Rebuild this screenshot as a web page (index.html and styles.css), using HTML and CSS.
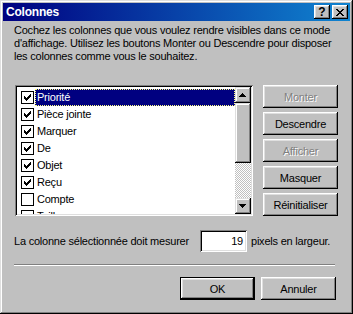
FILE: index.html
```html
<!DOCTYPE html>
<html lang="fr">
<head>
<meta charset="utf-8">
<title>Colonnes</title>
<link rel="stylesheet" href="styles.css">
</head>
<body>
<div class="window">
  <div class="titlebar">
    <span class="title">Colonnes</span>
    <div class="tbtns">
      <span class="tbtn raised help">?</span>
      <span class="tbtn raised close"><svg width="8" height="7" viewBox="0 0 8 7" shape-rendering="crispEdges"><path d="M0 0h2v1H0zM6 0h2v1H6zM1 1h2v1H1zM5 1h2v1H5zM2 2h4v1H2zM3 3h2v1H3zM2 4h4v1H2zM1 5h2v1H1zM5 5h2v1H5zM0 6h2v1H0zM6 6h2v1H6z" fill="#000"/></svg></span>
    </div>
  </div>
  <p class="desc">Cochez les colonnes que vous voulez rendre visibles dans ce mode<br>d'affichage. Utilisez les boutons Monter ou Descendre pour disposer<br>les colonnes comme vous le souhaitez.</p>
  <div class="main">
    <div class="listbox sunken">
      <ul class="rows">
        <li class="row selected"><svg class="cb" width="13" height="13" viewBox="0 0 13 13" shape-rendering="crispEdges"><rect x="0.5" y="0.5" width="12" height="12" fill="#fff" stroke="#000"/><path d="M3 5h1v3H3zM4 6h1v3H4zM5 7h1v3H5zM6 6h1v3H6zM7 5h1v3H7zM8 4h1v3H8zM9 3h1v3H9z" fill="#000"/></svg><span class="label">Priorité</span></li>
        <li class="row"><svg class="cb" width="13" height="13" viewBox="0 0 13 13" shape-rendering="crispEdges"><rect x="0.5" y="0.5" width="12" height="12" fill="#fff" stroke="#000"/><path d="M3 5h1v3H3zM4 6h1v3H4zM5 7h1v3H5zM6 6h1v3H6zM7 5h1v3H7zM8 4h1v3H8zM9 3h1v3H9z" fill="#000"/></svg><span class="label">Pièce jointe</span></li>
        <li class="row"><svg class="cb" width="13" height="13" viewBox="0 0 13 13" shape-rendering="crispEdges"><rect x="0.5" y="0.5" width="12" height="12" fill="#fff" stroke="#000"/><path d="M3 5h1v3H3zM4 6h1v3H4zM5 7h1v3H5zM6 6h1v3H6zM7 5h1v3H7zM8 4h1v3H8zM9 3h1v3H9z" fill="#000"/></svg><span class="label">Marquer</span></li>
        <li class="row"><svg class="cb" width="13" height="13" viewBox="0 0 13 13" shape-rendering="crispEdges"><rect x="0.5" y="0.5" width="12" height="12" fill="#fff" stroke="#000"/><path d="M3 5h1v3H3zM4 6h1v3H4zM5 7h1v3H5zM6 6h1v3H6zM7 5h1v3H7zM8 4h1v3H8zM9 3h1v3H9z" fill="#000"/></svg><span class="label">De</span></li>
        <li class="row"><svg class="cb" width="13" height="13" viewBox="0 0 13 13" shape-rendering="crispEdges"><rect x="0.5" y="0.5" width="12" height="12" fill="#fff" stroke="#000"/><path d="M3 5h1v3H3zM4 6h1v3H4zM5 7h1v3H5zM6 6h1v3H6zM7 5h1v3H7zM8 4h1v3H8zM9 3h1v3H9z" fill="#000"/></svg><span class="label">Objet</span></li>
        <li class="row"><svg class="cb" width="13" height="13" viewBox="0 0 13 13" shape-rendering="crispEdges"><rect x="0.5" y="0.5" width="12" height="12" fill="#fff" stroke="#000"/><path d="M3 5h1v3H3zM4 6h1v3H4zM5 7h1v3H5zM6 6h1v3H6zM7 5h1v3H7zM8 4h1v3H8zM9 3h1v3H9z" fill="#000"/></svg><span class="label">Reçu</span></li>
        <li class="row"><svg class="cb" width="13" height="13" viewBox="0 0 13 13" shape-rendering="crispEdges"><rect x="0.5" y="0.5" width="12" height="12" fill="#fff" stroke="#000"/></svg><span class="label">Compte</span></li>
        <li class="row"><svg class="cb" width="13" height="13" viewBox="0 0 13 13" shape-rendering="crispEdges"><rect x="0.5" y="0.5" width="12" height="12" fill="#fff" stroke="#000"/></svg><span class="label">Taille</span></li>
      </ul>
      <div class="scrollbar">
        <span class="sbtn sraised"><svg width="16" height="16" viewBox="0 0 16 16" shape-rendering="crispEdges"><path d="M7 6h1v1H7zM6 7h3v1H6zM5 8h5v1H5zM4 9h7v1H4z" fill="#000"/></svg></span>
        <span class="thumb sraised"></span>
        <span class="track"></span>
        <span class="sbtn sraised"><svg width="16" height="16" viewBox="0 0 16 16" shape-rendering="crispEdges"><path d="M4 6h7v1H4zM5 7h5v1H5zM6 8h3v1H6zM7 9h1v1H7z" fill="#000"/></svg></span>
      </div>
    </div>
    <div class="side">
      <span class="btn raised disabled">Monter</span>
      <span class="btn raised">Descendre</span>
      <span class="btn raised disabled">Afficher</span>
      <span class="btn raised">Masquer</span>
      <span class="btn raised">Réinitialiser</span>
    </div>
  </div>
  <div class="width-row">
    <span class="wlabel">La colonne sélectionnée doit mesurer</span>
    <span class="input sunken">19</span>
    <span class="suffix">pixels en largeur.</span>
  </div>
  <div class="sep"></div>
  <div class="footer">
    <span class="btn raised default">OK</span>
    <span class="btn raised">Annuler</span>
  </div>
</div>
</body>
</html>
```
FILE: styles.css
```css
html, body {
  margin: 0;
  padding: 0;
  background: #c0c0c0;
}
body {
  font-family: "Liberation Sans", Arial, sans-serif;
  font-size: 11px;
  letter-spacing: -0.22px;
  color: #000;
}
.window {
  box-sizing: border-box;
  width: 353px;
  height: 314px;
  padding: 3px;
  background: #c0c0c0;
  box-shadow: inset -1px -1px #000, inset 1px 1px #dfdfdf, inset -2px -2px #808080, inset 2px 2px #fff;
  display: flex;
  flex-direction: column;
}
.titlebar {
  height: 18px;
  background: linear-gradient(to right, #000080, #1084d0);
  display: flex;
  align-items: center;
  justify-content: space-between;
  padding: 0 2px 0 3px;
}
.title {
  color: #fff;
  font-weight: bold;
  font-size: 12px;
  letter-spacing: -0.2px;
}
.tbtns {
  display: flex;
  gap: 2px;
}
.tbtn {
  width: 16px;
  height: 14px;
  display: flex;
  align-items: center;
  justify-content: center;
  box-sizing: border-box;
}
.help {
  font-weight: bold;
  font-size: 12px;
  line-height: 14px;
  letter-spacing: 0;
}
.close svg { display: block; }
.raised {
  background: #c0c0c0;
  box-shadow: inset -1px -1px #000, inset 1px 1px #fff, inset -2px -2px #808080, inset 2px 2px #dfdfdf;
}
.sraised {
  background: #c0c0c0;
  box-shadow: inset -1px -1px #000, inset 1px 1px #dfdfdf, inset -2px -2px #808080, inset 2px 2px #fff;
}
.sunken {
  box-shadow: inset 1px 1px #808080, inset -1px -1px #fff, inset 2px 2px #000, inset -2px -2px #dfdfdf;
}
.desc {
  margin: 3px 0 0 11px;
  line-height: 13px;
}
.main {
  display: flex;
  margin: 22px 0 0 12px;
}
.listbox {
  box-sizing: border-box;
  width: 238px;
  height: 131px;
  padding: 2px;
  background: #fff;
  display: flex;
}
.rows {
  list-style: none;
  margin: 0;
  padding: 2px 0 0 0;
  flex: 1;
  overflow: hidden;
}
.row {
  height: 17px;
  display: flex;
  align-items: center;
  padding-left: 4px;
}
.cb { display: block; flex: none; }
.label {
  flex: 1;
  margin-left: 1px;
  padding: 0 2px;
  line-height: 17px;
  height: 17px;
  white-space: nowrap;
}
.selected .label {
  background: #000080;
  color: #fff;
  outline: 1px dotted #ffff80;
  outline-offset: -1px;
}
.scrollbar {
  width: 16px;
  display: flex;
  flex-direction: column;
}
.sbtn {
  width: 16px;
  height: 16px;
  flex: none;
}
.sbtn svg { display: block; }
.thumb {
  height: 60px;
  flex: none;
}
.track {
  flex: 1;
  background: repeating-conic-gradient(#fff 0 25%, #c0c0c0 0 50%) 0 0 / 2px 2px;
}
.side {
  display: flex;
  flex-direction: column;
  gap: 4px;
  margin-left: 10px;
}
.btn {
  box-sizing: border-box;
  width: 75px;
  height: 23px;
  display: flex;
  align-items: center;
  justify-content: center;
}
.btn.disabled {
  color: #808080;
  text-shadow: 1px 1px #fff;
}
.width-row {
  display: flex;
  align-items: center;
  margin: 14px 0 0 11px;
  height: 22px;
}
.wlabel {
  width: 186px;
  flex: none;
}
.input {
  box-sizing: border-box;
  width: 47px;
  height: 22px;
  background: #fff;
  text-align: right;
  padding-right: 4px;
  line-height: 22px;
}
.suffix {
  margin-left: 4px;
}
.sep {
  margin: 12px 0 0 11px;
  width: 321px;
  border-top: 1px solid #808080;
  border-bottom: 1px solid #fff;
  height: 0;
}
.footer {
  display: flex;
  gap: 6px;
  margin: 11px 0 0 177px;
}
.btn.default {
  box-shadow: inset 0 0 0 1px #000, inset -2px -2px #000, inset 2px 2px #fff, inset -3px -3px #808080, inset 3px 3px #dfdfdf;
}
```
